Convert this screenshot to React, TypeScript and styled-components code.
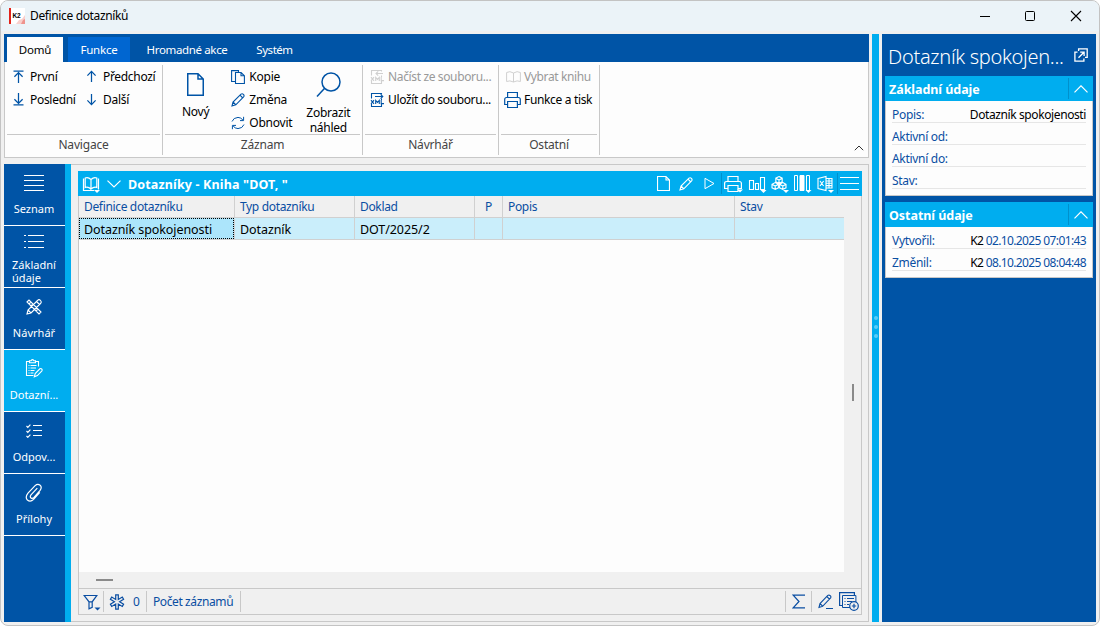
import React from "react";
import styled, { createGlobalStyle, css } from "styled-components";

const C = {
  blue: "#0054a6",
  cyan: "#00adef",
  text: "#0a4ea2",
  gray: "#f0f0f0",
  line: "#c8c8c8",
  white: "#fdfdfd",
};

const Global = createGlobalStyle`
  * { box-sizing: border-box; }
  body { margin: 0; background: #fff; }
  svg { display: block; flex: none; }
`;

const Window = styled.div`
  width: 1100px;
  height: 626px;
  display: flex;
  flex-direction: column;
  background: ${C.gray};
  border: 1px solid #c3c3c3;
  border-radius: 8px;
  overflow: hidden;
  font: 12px/16px "Noto Sans", "Open Sans", sans-serif;
  letter-spacing: -0.2px;
  color: #000;
  white-space: nowrap;
`;

const TitleBar = styled.header`
  height: 30px;
  flex: none;
  display: flex;
  align-items: center;
  padding-left: 8px;
  background: #ebf3f8;
`;
const WindowTitle = styled.span<{ $ls?: number }>`
  flex: 1;
  margin-left: 5px;
  letter-spacing: ${(p) => p.$ls ?? 0}px;
`;
const WindowButtons = styled.div`
  display: flex;
  gap: 34px;
  padding-right: 17px;
`;

const Body = styled.div`
  flex: 1;
  display: flex;
  padding: 3px 3px 3px 3px;
  min-height: 0;
`;
const Left = styled.div`
  width: 865px;
  display: flex;
  flex-direction: column;
`;

const TabBar = styled.nav`
  height: 28px;
  flex: none;
  display: flex;
  align-items: stretch;
  padding: 3px 0 0 3px;
  background: ${C.blue};
`;
const Tab = styled.div<{ $kind?: "active" | "hot"; $w: number; $gap?: number; $ls?: number }>`
  width: ${(p) => p.$w}px;
  margin-right: ${(p) => p.$gap ?? 0}px;
  text-align: center;
  font-size: 11.5px;
  line-height: 25px;
  letter-spacing: ${(p) => p.$ls ?? -0.2}px;
  color: ${(p) => (p.$kind === "active" ? "#000" : "#fff")};
  background: ${(p) => (p.$kind === "active" ? C.white : p.$kind === "hot" ? "#0066d1" : "transparent")};
`;

const Ribbon = styled.section`
  height: 96px;
  flex: none;
  display: flex;
  padding-top: 3px;
  background: ${C.white};
  border: 1px solid ${C.line};
  border-top: 0;
`;
const Group = styled.div<{ $w: number }>`
  width: ${(p) => p.$w}px;
  height: 90px;
  display: flex;
  flex-direction: column;
  padding: 0 2px;
  border-right: 1px solid ${C.line};
`;
const GroupBody = styled.div`
  height: 70px;
  display: flex;
  border-bottom: 1px solid ${C.line};
`;
const GroupLabel = styled.div`
  text-align: center;
  line-height: 20px;
  color: #444;
  letter-spacing: -0.2px;
`;
const Stack = styled.div<{ $w: number; $pl?: number }>`
  width: ${(p) => p.$w}px;
  padding-left: ${(p) => p.$pl ?? 0}px;
`;
const Command = styled.div<{ $off?: boolean; $ls?: number; $gap?: number }>`
  height: 23px;
  display: flex;
  align-items: center;
  gap: ${(p) => p.$gap ?? 4}px;
  letter-spacing: ${(p) => p.$ls ?? -0.25}px;
  color: ${(p) => (p.$off ? "#999" : "#000")};
  svg { color: ${(p) => (p.$off ? "#d0d0d0" : C.blue)}; }
`;
const BigCommand = styled.div<{ $w: number; $pt: number; $pl?: number }>`
  width: ${(p) => p.$w}px;
  display: flex;
  flex-direction: column;
  align-items: center;
  padding-top: ${(p) => p.$pt}px;
  padding-left: ${(p) => p.$pl ?? 0}px;
  line-height: 15px;
  text-align: center;
  letter-spacing: -0.25px;
  color: #000;
  svg { color: ${C.blue}; margin-bottom: 8px; }
`;
const RibbonEnd = styled.div`
  flex: 1;
  display: flex;
  justify-content: flex-end;
  align-items: flex-end;
  padding: 0 4px 6px 0;
`;

const Work = styled.div`
  flex: 1;
  min-height: 0;
  display: flex;
  margin-top: 6px;
`;
const Side = styled.aside`
  width: 67px;
  flex: none;
  background: ${C.blue};
  border-right: 6px solid ${C.cyan};
`;
const SideItem = styled.div<{ $active?: boolean }>`
  height: 62px;
  display: flex;
  flex-direction: column;
  align-items: center;
  padding-right: 1px;
  border-bottom: 1px solid #fff;
  background: ${(p) => (p.$active ? C.cyan : "transparent")};
  color: #fff;
  font-size: 11px;
  letter-spacing: 0.02px;
`;
const SideIcon = styled.div<{ $h?: number }>`
  height: ${(p) => p.$h ?? 37}px;
  display: flex;
  align-items: center;
`;
const SideText = styled.div<{ $two?: boolean }>`
  line-height: ${(p) => (p.$two ? 13 : 16)}px;
  margin-top: ${(p) => (p.$two ? 1 : 0)}px;
`;

const Main = styled.main`
  flex: 1;
  border: 1px solid ${C.line};
  border-left: 0;
  padding: 6px 6px 6px 7px;
`;
const Grid = styled.div`
  height: 444px;
  display: flex;
  flex-direction: column;
`;
const GridTitle = styled.div`
  height: 25px;
  flex: none;
  display: flex;
  align-items: center;
  padding: 0 3px 0 4px;
  background: ${C.cyan};
  color: #fff;
`;
const GridCaption = styled.b`
  flex: 1;
  margin-left: 7px;
  padding-top: 2px;
  font-size: 12.5px;
  font-weight: 700;
  letter-spacing: 0.15px;
`;
const Tools = styled.div`
  display: flex;
  align-items: center;
`;
const Divider = styled.i<{ $h: number; $c: string; $m?: string }>`
  width: 1px;
  height: ${(p) => p.$h}px;
  margin: ${(p) => p.$m ?? "0"};
  background: ${(p) => p.$c};
`;
const GridBody = styled.div`
  flex: 1;
  display: flex;
  min-height: 0;
  border: 1px solid ${C.line};
  border-top: 0;
`;
const Table = styled.div`
  width: 765px;
  display: flex;
  flex-direction: column;
  background: ${C.white};
`;
const columns = "156px 120px 120px 28px 232px 109px";
const Row = styled.div<{ $head?: boolean }>`
  height: 22px;
  flex: none;
  display: grid;
  grid-template-columns: ${columns};
  grid-template-rows: 22px;
  background: ${(p) => (p.$head ? C.gray : "#caeefb")};
`;
const Cell = styled.div<{ $head?: boolean; $focus?: boolean; $last?: boolean; $center?: boolean }>`
  border-right: ${(p) => (p.$last ? "0" : "1px solid #d0d0d0")};
  border-bottom: 1px solid #d0d0d0;
  padding-left: ${(p) => (p.$center ? 0 : 5)}px;
  text-align: ${(p) => (p.$center ? "center" : "left")};
  ${(p) =>
    p.$head
      ? css`color: ${C.text}; letter-spacing: -0.34px; line-height: 21px;`
      : css`color: #000; font-size: 12.5px; letter-spacing: -0.08px; line-height: 23px;`}
  ${(p) =>
    p.$focus &&
    css`
      margin: 0 1px 1px 0;
      padding-left: 4px;
      line-height: 21px;
      background: #ace5fb;
      border: 1px dotted #000;
      box-shadow: 1px 1px 0 #d0d0d0;
    `}
`;
const Empty = styled.div`
  flex: 1;
`;
const HScroll = styled.div`
  height: 16px;
  background: ${C.gray};
  padding: 7px 0 0 17px;
  &::before { content: ""; display: block; width: 17px; height: 2px; background: #8a8a8a; }
`;
const VScroll = styled.div`
  flex: 1;
  background: ${C.gray};
  padding: 188px 0 0 8px;
  &::before { content: ""; display: block; width: 2px; height: 17px; background: #8a8a8a; }
`;
const Status = styled.div`
  height: 26px;
  flex: none;
  display: flex;
  align-items: center;
  border: 1px solid ${C.line};
  border-top: 0;
  padding: 0 2px 0 4px;
  color: ${C.text};
`;
const StatusText = styled.span<{ $ml: number; $ls?: number }>`
  margin-left: ${(p) => p.$ml}px;
  letter-spacing: ${(p) => p.$ls ?? 0}px;
`;
const Spacer = styled.div`
  flex: 1;
`;

const Splitter = styled.div`
  width: 7px;
  flex: none;
  margin: 0 3px;
  padding-bottom: 2px;
  display: flex;
  flex-direction: column;
  align-items: center;
  justify-content: center;
  gap: 5px;
  background: ${C.cyan};
  i { width: 4px; height: 4px; border-radius: 2px; background: #58cbf7; }
`;
const Info = styled.aside`
  width: 214px;
  flex: none;
  padding: 0 3px;
  background: ${C.blue};
`;
const InfoTitle = styled.div`
  height: 42px;
  display: flex;
  align-items: center;
  justify-content: space-between;
  padding: 4px 5px 0 3px;
  color: #fff;
  font-size: 20px;
  font-weight: 300;
  letter-spacing: -0.3px;
  svg { margin-bottom: 4px; }
`;
const Card = styled.section<{ $h: number }>`
  height: ${(p) => p.$h}px;
  margin-bottom: 6px;
  background: ${C.white};
  border: 1px solid ${C.line};
  border-top: 0;
`;
const CardHead = styled.div`
  height: 25px;
  margin: 0 -1px;
  display: flex;
  align-items: center;
  padding: 0 5px 0 4px;
  background: ${C.cyan};
  color: #fff;
  b { flex: 1; font-size: 12.5px; letter-spacing: -0.05px; padding-top: 2px; }
`;
const CardBody = styled.div`
  padding: 0 6px;
`;
const Field = styled.div`
  height: 22px;
  display: flex;
  justify-content: space-between;
  align-items: flex-end;
  line-height: 14px;
  letter-spacing: -0.3px;
  border-bottom: 1px solid #e6e6e6;
  color: ${C.text};
  em { font-style: normal; color: #000; }
`;
const Value = styled.span<{ $ls?: number }>`
  letter-spacing: ${(p) => p.$ls ?? -0.4}px;
`;

/* ---- icons ---- */
type IconProps = { w: number; h: number; children: React.ReactNode; m?: number; sw?: number };
const Glyph = styled.svg<{ $ml?: number }>`
  margin-left: ${(p) => p.$ml ?? 0}px;
`;
const Icon = ({ w, h, children, m, sw = 1 }: IconProps) => (
  <Glyph $ml={m} width={w} height={h} viewBox={`0 0 ${w} ${h}`} fill="none" stroke="currentColor" strokeWidth={sw}>
    {children}
  </Glyph>
);

const Logo = () => (
  <Icon w={16} h={16}>
    <g stroke="none">
      <rect width="16" height="16" fill="#fff" />
      <rect width="2" height="16" fill="#e2231a" />
      <path d="M7 16l3-4 3-1 3-4v9z" fill="#f9cfcc" />
      <path d="M12 16l2-4 2-1v5z" fill="#ee938d" />
      <text x="3.6" y="10" fontSize="6.5" fontWeight="900" fontFamily="Liberation Sans, sans-serif" letterSpacing="-0.2" fill="#000">K2</text>
    </g>
  </Icon>
);
const Pencil = ({ m }: { m?: number }) => (
  <Icon w={14} h={14} m={m} sw={1.1}>
    <path d="M1 13l1-4L10 1.2Q11.2 .2 12.4 1.4T12.6 3.8L4.8 11.8zM2 9l3 3M9 2.2l2.8 2.8" />
  </Icon>
);
const Arrow = ({ down, bar }: { down?: boolean; bar?: boolean }) => (
  <Icon w={13} h={13} sw={1.25}>
    <g transform={down ? "rotate(180 6.5 6.5)" : undefined}>
      <path d={bar ? "M1.5 1.1h10M6.5 13V2.4M2.4 6.8l4.1-4.2 4.1 4.2" : "M6.5 12V1.4M2.4 5.6l4.1-4.2 4.1 4.2"} />
    </g>
  </Icon>
);
const Page = ({ w, h, sw, f, m }: { w: number; h: number; sw: number; f: number; m?: number }) => (
  <Icon w={w} h={h} sw={sw} m={m}>
    <path d={`M${sw / 2} ${sw / 2}H${w - f}L${w - sw / 2} ${f}V${h - sw / 2}H${sw / 2}zM${w - f} ${sw / 2}V${f}H${w - sw / 2}`} />
  </Icon>
);
const Copy = () => (
  <Icon w={14} h={14} sw={1.1}>
    <path d="M4.5 11.5H.6V.6H7.5V2.5" />
    <path d="M4.5 2.5h5.6l3.3 3.3v7.7H4.5zM10 2.6v3.2h3.4" />
  </Icon>
);
const Refresh = () => (
  <Icon w={14} h={14} sw={1}>
    <path d="M1 5.5Q2.5 1.6 7 1.4q3 0 5 2.8M12.6.8v3.8H9M13 8.5q-1.5 3.9-6 4.1-3 0-5-2.8M1.4 13.2V9.4H5" />
  </Icon>
);
const Lens = () => (
  <Icon w={25} h={26} sw={1.5}>
    <circle cx="15" cy="11" r="9" />
    <path d="M8.4 17.5L1 25.5" />
  </Icon>
);
const Xml = ({ out }: { out?: boolean }) => (
  <Icon w={14} h={15} sw={1.1}>
    <path d="M1.5 6.5V1.5h10v1M1.5 12v2.5h10V12M11.5 6.5V8" />
    <path d={out ? "M5 4.5h8M10.6 2.3l2.2 2.2-2.2 2.2" : "M13 4.5H6M8.2 2.3L6 4.5l2.2 2.2"} />
    <path d="M1 8.2l3 3.6M4 8.2l-3 3.6M5.7 12V8.4l1.8 2 1.8-2V12M11.2 8v3.6H14" />
  </Icon>
);
const Book = ({ w = 15, h = 13 }: { w?: number; h?: number }) => (
  <Icon w={w} h={h}>
    <path d={`M${w / 2} 2Q${w / 4} -.4 .6 1.5V${h - 1.5}Q${w / 4} ${h - 3} ${w / 2} ${h - 1}Q${w * 0.75} ${h - 3} ${w - 0.6} ${h - 1.5}V1.5Q${w * 0.75} -.4 ${w / 2} 2V${h - 1}`} />
  </Icon>
);
const Drop = () => <path d="M0 0h6l-3 3z" fill="currentColor" stroke="none" />;
const Printer = ({ drop }: { drop?: boolean }) => (
  <Icon w={19} h={drop ? 18 : 16} sw={1.2}>
    <path
      d={
        drop
          ? "M4 6.5v-5h10v5M3.5 13.5H.6v-5q0-2 2-2h12.8q2 0 2 2v5H14.5M4 10.5h10v6H4z"
          : "M3.6 5.5v-5h9.8v5M3.2 12.5H.7V7.4q0-1.9 1.9-1.9h11.8q1.9 0 1.9 1.9v5.1h-2.5M3.6 9.5h9.8v6H3.6z"
      }
    />
    {drop && <g transform="translate(13 14.5)"><Drop /></g>}
  </Icon>
);
const Chevron = ({ up, w = 14, sw = 1.2, m }: { up?: boolean; w?: number; sw?: number; m?: number }) => (
  <Icon w={w} h={w / 2 + 1} sw={sw} m={m}>
    <path d={up ? `M.5 ${w / 2 + 0.3}L${w / 2} .8L${w - 0.5} ${w / 2 + 0.3}` : `M.5 .6L${w / 2} ${w / 2}L${w - 0.5} .6`} />
  </Icon>
);

const App = () => (
  <>
    <Global />
    <Window>
      <TitleBar>
        <Logo />
        <WindowTitle $ls={-0.36}>Definice dotazníků</WindowTitle>
        <WindowButtons>
          <Icon w={12} h={12}><path d="M2 6.5h10" stroke="#000" /></Icon>
          <Icon w={12} h={12}><rect x="1.5" y="1.5" width="9" height="9" rx="1" stroke="#000" /></Icon>
          <Icon w={12} h={12}><path d="M1 1l10 10M11 1L1 11" stroke="#000" strokeWidth="1.1" /></Icon>
        </WindowButtons>
      </TitleBar>
      <Body>
        <Left>
          <TabBar>
            <Tab $kind="active" $w={56} $gap={5}>Domů</Tab>
            <Tab $kind="hot" $w={62}>Funkce</Tab>
            <Tab $w={114} $ls={-0.35}>Hromadné akce</Tab>
            <Tab $w={61} $ls={-0.45}>Systém</Tab>
          </TabBar>
          <Ribbon>
            <Group $w={158}>
              <GroupBody>
                <Stack $w={73} $pl={5}>
                  <Command $gap={5}><Arrow bar />První</Command>
                  <Command $gap={5} $ls={-0.3}><Arrow bar down />Poslední</Command>
                </Stack>
                <Stack $w={80} $pl={5}>
                  <Command $gap={5} $ls={-0.32}><Arrow />Předchozí</Command>
                  <Command $gap={5}><Arrow down />Další</Command>
                </Stack>
              </GroupBody>
              <GroupLabel>Navigace</GroupLabel>
            </Group>
            <Group $w={200}>
              <GroupBody>
                <BigCommand $w={62} $pt={8}>
                  <Page w={17} h={23} sw={1.5} f={6} />
                  <span>Nový</span>
                </BigCommand>
                <Stack $w={69} $pl={5}>
                  <Command><Copy />Kopie</Command>
                  <Command><Pencil />Změna</Command>
                  <Command><Refresh />Obnovit</Command>
                </Stack>
                <BigCommand $w={66} $pt={6} $pl={2}>
                  <Lens />
                  <span>Zobrazit<br />náhled</span>
                </BigCommand>
              </GroupBody>
              <GroupLabel>Záznam</GroupLabel>
            </Group>
            <Group $w={136}>
              <GroupBody>
                <Stack $w={131} $pl={5}>
                  <Command $off $ls={-0.36}><Xml />Načíst ze souboru...</Command>
                  <Command $ls={-0.36}><Xml out />Uložít do souboru...</Command>
                </Stack>
              </GroupBody>
              <GroupLabel>Návrhář</GroupLabel>
            </Group>
            <Group $w={101}>
              <GroupBody>
                <Stack $w={96} $pl={1}>
                  <Command $off $gap={3} $ls={-0.38}><Glyph width="1" height="1" /><Book w={15} h={12} />Vybrat knihu</Command>
                  <Command $gap={1} $ls={-0.34}><Glyph width="1" height="1" /><Printer />Funkce a tisk</Command>
                </Stack>
              </GroupBody>
              <GroupLabel>Ostatní</GroupLabel>
            </Group>
            <RibbonEnd><Icon w={10} h={6}><path d="M.8 5.2L5 1l4.2 4.2" stroke="#333" /></Icon></RibbonEnd>
          </Ribbon>
          <Work>
            <Side>
              <SideItem>
                <SideIcon><Icon w={20} h={18}><path d="M0 1.5h20M0 6.5h20M0 11.5h20M0 16.5h20" /></Icon></SideIcon>
                <SideText>Seznam</SideText>
              </SideItem>
              <SideItem>
                <SideIcon $h={31}><Icon w={20} h={15}><path d="M0 1.5h2M4 1.5h16M0 7.5h2M4 7.5h16M0 13.5h2M4 13.5h16" /></Icon></SideIcon>
                <SideText $two>Základní<br />údaje</SideText>
              </SideItem>
              <SideItem>
                <SideIcon>
                  <Icon w={16} h={16} sw={1.1}>
                    <path d="M1 3L3 1l12 12-2 2zM3 5l1.5-1.5M5 7l1.5-1.5M10 12l1.5-1.5M1 15l1-4L11.5 1.5Q13-.2 14.5 1.5t0 3L5 14zM2 11l3 3M10.5 2.5l3 3" />
                  </Icon>
                </SideIcon>
                <SideText>Návrhář</SideText>
              </SideItem>
              <SideItem $active>
                <SideIcon>
                  <Icon w={18} h={19} sw={1.1}>
                    <path d="M4.5 2.5H1.5v14h7M10.5 2.5h3v5M4.5 3.8v-2h1.6Q7.5-.6 8.9 1.8h1.6v2z" />
                    <path d="M3.5 6.5h1M5.5 6.5h6M3.5 9h1M5.5 9h5.5M3.5 11.5h1M5.5 11.5h4M3.5 14h1M5.5 14h3" />
                    <path d="M9.3 17.8l.9-3.3 4.7-4.7q1-.6 1.8.2t.2 1.8l-4.5 4.8z" />
                  </Icon>
                </SideIcon>
                <SideText>Dotazní...</SideText>
              </SideItem>
              <SideItem>
                <SideIcon>
                  <Icon w={16} h={14} sw={1.2}>
                    <path d="M.5 2l1.3 1.3L4.4.6M.5 7l1.3 1.3 2.6-2.7M.5 12l1.3 1.3 2.6-2.7" />
                    <path d="M7 1.5h9M7 6.5h9M7 11.5h9" strokeWidth="1" />
                  </Icon>
                </SideIcon>
                <SideText>Odpov...</SideText>
              </SideItem>
              <SideItem>
                <SideIcon>
                  <Icon w={18} h={20} sw={1.2}>
                    <path d="M12.3 5.2L6 11.9q-1.4 2 0 3 1.4 1 3-.6l6.1-6.9q2.2-3 0-5.2-2.4-2-5 .4L3 10.2q-3.2 4-.6 6.8 3 2.4 6.2-.6l6.2-7" />
                  </Icon>
                </SideIcon>
                <SideText>Přílohy</SideText>
              </SideItem>
            </Side>
            <Main>
              <Grid>
                <GridTitle>
                  <Icon w={18} h={18} sw={1.2}>
                    <path d="M12 15.5H1.5v-12M9 4.5Q6 1.6 3.2 3v9.5Q6 11.4 9 14M9 4.5q3-2.9 5.8-1.5v9.5Q12 11.4 9 14zM16.5 3.5v11" />
                    <g transform="translate(12 15)"><Drop /></g>
                  </Icon>
                  <Chevron m={7} />
                  <GridCaption>Dotazníky - Kniha "DOT, "</GridCaption>
                  <Tools>
                    <Page w={13} h={15} sw={1.1} f={4} />
                    <Pencil m={9} />
                    <Icon w={11} h={13} m={11}><path d="M1 1.3v10.4L10 6.5z" /></Icon>
                    <Divider $h={21} $c="#0090cc" $m="0 2px 0 6px" />
                    <Printer drop />
                    <Icon w={19} h={18} m={5} sw={1.1}>
                      <path d="M1.5 5.5h4v9h-4zM7.5 8.5h3v6h-3zM12.5 14.5v-12h4v12z" />
                      <g transform="translate(12.5 15)"><Drop /></g>
                    </Icon>
                    <Icon w={18} h={18} m={4} sw={1.1}>
                      <path d="M8 1.5l3.2 1.7v3.5L8 8.4 4.8 6.7V3.2zM4.8 3.2L8 5l3.2-1.8M8 5v3.4M4.2 7.6l3.2 1.7v3.5l-3.2 1.7L1 12.8V9.3zM1 9.3l3.2 1.8 3.2-1.8M4.2 11.1v3.4M11.8 7.6L15 9.3v3.5l-3.2 1.7-3.2-1.7V9.3zM8.6 9.3l3.2 1.8L15 9.3M11.8 11.1v3.4" />
                      <g transform="translate(12 15)"><Drop /></g>
                    </Icon>
                    <Icon w={19} h={19} m={4}>
                      <path d="M1.5 1.5h3v15h-3zM13.5 1.5h3v15h-3z" />
                      <path d="M7 1.5h4v15H7z" fill="currentColor" />
                      <g transform="translate(12.5 16)"><Drop /></g>
                    </Icon>
                    <Icon w={18} h={18} m={5} sw={1.1}>
                      <path d="M1 3.5l8-2v14l-8-2zM9 3.5h6V13H9M9 6h6M9 8.3h6M9 10.6h6M12 3.5V13M3 6l3.6 5M6.6 6L3 11" />
                      <g transform="translate(11 15)"><Drop /></g>
                    </Icon>
                    <Divider $h={21} $c="#0090cc" $m="0 2px 0 2px" />
                    <Icon w={19} h={13}><path d="M0 .5h19M0 6.5h19M0 12.5h19" /></Icon>
                  </Tools>
                </GridTitle>
                <GridBody>
                  <Table>
                    <Row $head>
                      <Cell $head>Definice dotazníku</Cell>
                      <Cell $head>Typ dotazníku</Cell>
                      <Cell $head>Doklad</Cell>
                      <Cell $head $center>P</Cell>
                      <Cell $head>Popis</Cell>
                      <Cell $head $last>Stav</Cell>
                    </Row>
                    <Row>
                      <Cell $focus>Dotazník spokojenosti</Cell>
                      <Cell>Dotazník</Cell>
                      <Cell>DOT/2025/2</Cell>
                      <Cell />
                      <Cell />
                      <Cell $last />
                    </Row>
                    <Empty />
                    <HScroll />
                  </Table>
                  <VScroll />
                </GridBody>
                <Status>
                  <Icon w={18} h={18} sw={1.2}>
                    <path d="M1.2 2.5h12.6L9.2 8.8v5.5L6 15.8v-7zM6 8.8h3.2" />
                    <g transform="translate(11.5 14.5)"><Drop /></g>
                  </Icon>
                  <Divider $h={21} $c={C.line} $m="0 0 0 2px" />
                  <Icon w={16} h={16} m={5} sw={1.2}>
                    <path d="M6.7.8h2.6v4.7l4-2.4 1.3 2.2-4 2.5 4 2.4-1.3 2.3-4-2.4v5H6.7v-5l-4 2.4-1.3-2.3 4-2.4-4-2.5 1.3-2.2 4 2.4z" />
                  </Icon>
                  <StatusText $ml={8}>0</StatusText>
                  <Divider $h={21} $c={C.line} $m="0 0 0 6px" />
                  <StatusText $ml={6} $ls={-0.38}>Počet záznamů</StatusText>
                  <Divider $h={21} $c={C.line} $m="0 0 0 7px" />
                  <Spacer />
                  <Divider $h={21} $c={C.line} $m="0 6px 0 0" />
                  <Icon w={13} h={15} sw={1.2}><path d="M13 1.2H1.2L7 7.5l-5.8 6.3H13" /></Icon>
                  <Divider $h={21} $c={C.line} $m="0 6px 0 6px" />
                  <Icon w={15} h={15} sw={1.1}>
                    <path d="M1 13.5l1-4L9.8 1.4Q11 .6 12.2 1.7t.4 2.2l-8 8.4zM2 9.5l2.8 2.8M8.8 2.5l2.7 2.7M8 14.5h7" />
                  </Icon>
                  <Icon w={20} h={19} m={6}>
                    <path d="M3 13.5H.6V.6h14.8V3" strokeWidth="1.2" />
                    <path d="M11 15.5H3.5v-12h13.4V10M5.5 6.5h1M8 6.5h7M5.5 9.5h1M8 9.5h5M5.5 12.5h1M8 12.5h2" />
                    <circle cx="15" cy="14" r="4.3" fill={C.gray} strokeWidth="1.2" />
                    <path d="M12.8 14h4.4M15 11.8v4.4" strokeWidth="1.2" />
                  </Icon>
                </Status>
              </Grid>
            </Main>
          </Work>
        </Left>
        <Splitter><i /><i /><i /></Splitter>
        <Info>
          <InfoTitle>
            <span>Dotazník spokojen...</span>
            <Icon w={14} h={14} sw={1.3}>
              <path d="M4.6 3V.8h8.6v8.6H11M3.5 4.2H.9v9h9v-2.7M4.5 9.7l5.4-5.5M6.2 4.2h3.9V8" />
            </Icon>
          </InfoTitle>
          <Card $h={120}>
            <CardHead><b>Základní údaje</b><Divider $h={21} $c="#0090cc" $m="0 5px 0 0" /><Chevron up /></CardHead>
            <CardBody>
              <Field>Popis:<Value><em>Dotazník spokojenosti</em></Value></Field>
              <Field>Aktivní od:</Field>
              <Field>Aktivní do:</Field>
              <Field>Stav:</Field>
            </CardBody>
          </Card>
          <Card $h={76}>
            <CardHead><b>Ostatní údaje</b><Divider $h={21} $c="#0090cc" $m="0 5px 0 0" /><Chevron up /></CardHead>
            <CardBody>
              <Field>Vytvořil:<Value $ls={-0.62}><em>K2</em> 02.10.2025 07:01:43</Value></Field>
              <Field>Změnil:<Value $ls={-0.62}><em>K2</em> 08.10.2025 08:04:48</Value></Field>
            </CardBody>
          </Card>
        </Info>
      </Body>
    </Window>
  </>
);

export default App;
